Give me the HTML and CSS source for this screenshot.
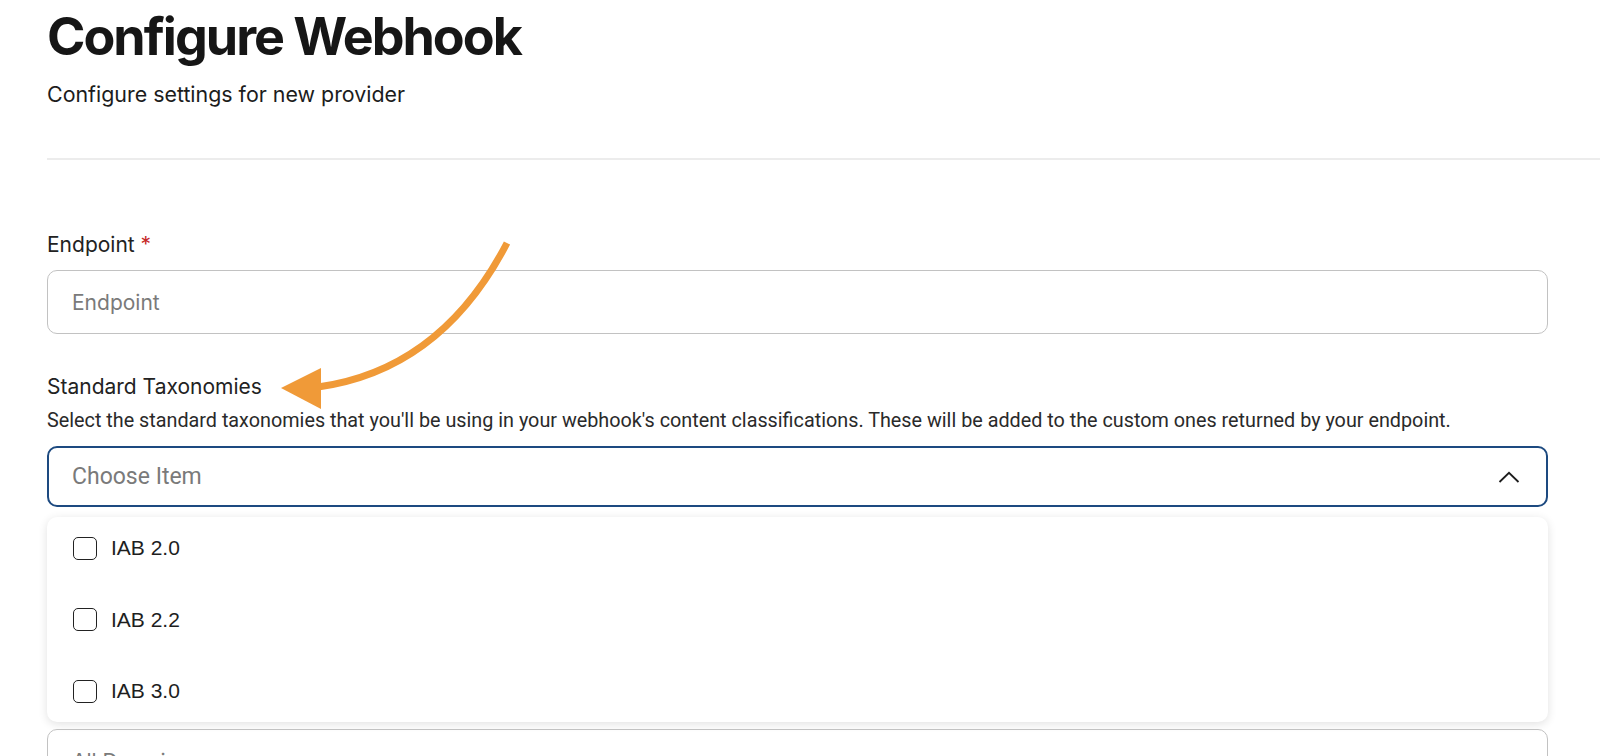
FILE: index.html
```html
<!DOCTYPE html>
<html lang="en">
<head>
    <meta charset="UTF-8">
    <meta name="viewport" content="width=device-width, initial-scale=1.0">
    <title>Configure Webhook</title>
    <link rel="stylesheet" href="styles.css">
</head>
<body>
    <div id="page">
        <div id="head">
            <h1>Configure Webhook</h1>
            <p class="sub">Configure settings for new provider</p>
        </div>
        <div class="divider"></div>

        <div id="form">
            <div class="field">
                <div class="label">Endpoint <span class="req">*</span></div>
                <div class="input"><span class="ph">Endpoint</span></div>
            </div>

            <div class="field tax">
                <div class="label">Standard Taxonomies</div>
                <div class="help">Select the standard taxonomies that you'll be using in your webhook's content classifications. These will be added to the custom ones returned by your endpoint.</div>
                <div class="input select open">
                    <span class="ph choose">Choose Item</span>
                    <svg class="chev" width="22" height="12" viewBox="0 0 22 12">
                        <path d="M1.5 11 L11 1.8 L20.5 11" fill="none" stroke="#1c1c1c" stroke-width="1.8"/>
                    </svg>
                </div>
                <div class="menu">
                    <div class="opt"><span class="box"></span>IAB 2.0</div>
                    <div class="opt"><span class="box"></span>IAB 2.2</div>
                    <div class="opt"><span class="box"></span>IAB 3.0</div>
                </div>
            </div>

            <div class="input last"><span class="ph">All Domains</span></div>
        </div>

        <!-- annotation arrow drawn over the form -->
        <svg class="annot" width="1600" height="756" viewBox="0 0 1600 756">
            <path d="M507 243 Q441 370 318 387" fill="none" stroke="#f09a38" stroke-width="7"/>
            <polygon points="281,388 321,368 321,409" fill="#f09a38"/>
        </svg>
    </div>
</body>
</html>
```

FILE: styles.css
```css
*{
    margin: 0;
    padding: 0;
    box-sizing: border-box;
}
body{
    background: #fff;
    font-family: Inter, "Noto Sans", sans-serif;
    color: #1f1f1f;
    overflow: hidden;
}
#page{
    position: relative;
    height: 756px;
    padding-left: 47px;
}
#head{
    padding-top: 5px;
}
h1{
    font-size: 52px;
    font-weight: 700;
    letter-spacing: -2px;
    line-height: 64px;
    color: #161616;
}
.sub{
    margin-top: 11px;
    font-size: 21.4px;
    line-height: 28px;
    color: #1c1c1c;
}
.divider{
    margin-top: 50px;
    height: 2px;
    background: #ececec;
}
#form{
    width: 1501px;
    padding-top: 72px;
}
.label{
    font-size: 21px;
    line-height: 26px;
    color: #222;
}
.req{
    color: #c62828;
}
.input{
    height: 64px;
    margin-top: 12px;
    border: 1px solid #c2c2c2;
    border-radius: 10px;
    display: flex;
    align-items: center;
    padding-left: 24px;
}
.ph{
    font-size: 21px;
    color: #7a7a7a;
}
.tax{
    margin-top: 40px;
}
.help{
    margin-top: 9px;
    font-family: Roboto, sans-serif;
    font-size: 19.8px;
    line-height: 24px;
    color: #2a2a2a;
}
.select{
    margin-top: 13px;
    height: 61px;
    border: 2px solid #1d4a80;
    justify-content: space-between;
    padding-left: 23px;
    padding-right: 26px;
}
.choose{
    font-family: Roboto, sans-serif;
    font-size: 23px;
}
.menu{
    margin-top: 10px;
    height: 205px;
    background: #fff;
    border-radius: 10px;
    box-shadow: 0 2px 10px rgba(0, 0, 0, 0.12);
    display: flex;
    flex-direction: column;
    gap: 9.5px;
}
.opt{
    height: 62px;
    display: flex;
    align-items: center;
    padding-left: 26px;
    font-family: "Liberation Sans", Arial, sans-serif;
    font-size: 21px;
    color: #1e1e1e;
}
.box{
    width: 24px;
    height: 23px;
    border: 1.5px solid #222;
    border-radius: 5px;
    margin-right: 14px;
}
.annot{
    position: absolute;
    top: 0;
    left: 0;
    pointer-events: none;
}
.input.last{
    margin-top: 7px;
}
```
